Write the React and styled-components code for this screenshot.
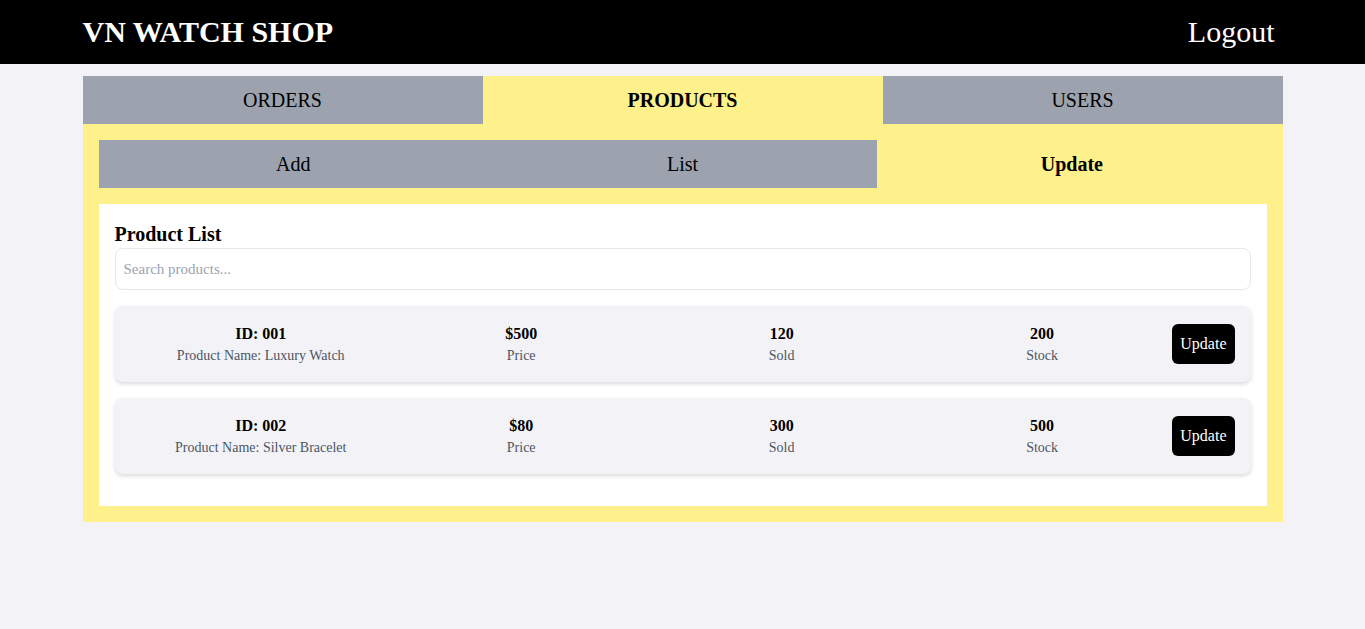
import React from "react";
import styled, { createGlobalStyle } from "styled-components";

const Global = createGlobalStyle`
  * { box-sizing: border-box; }
  body {
    margin: 0;
    background: #f3f3f7;
    font-family: "Liberation Serif", "Times New Roman", serif;
    color: #000;
  }
`;

const Header = styled.header`
  background: #000;
  height: 64px;
  display: flex;
  justify-content: center;
`;

const HeaderInner = styled.div`
  width: 1200px;
  display: flex;
  align-items: center;
  justify-content: space-between;
`;

const Brand = styled.h1`
  margin: 0;
  color: #fff;
  font-size: 30px;
  font-weight: bold;
  line-height: 36px;
`;

const LogoutButton = styled.button`
  background: none;
  border: none;
  color: #fff;
  font-family: inherit;
  font-size: 30px;
  line-height: 36px;
  padding: 0 8px;
  cursor: pointer;
`;

const Main = styled.main`
  width: 1200px;
  margin: 12px auto 0;
`;

const TabBar = styled.div`
  display: grid;
  grid-template-columns: repeat(3, 1fr);
`;

const Tab = styled.div`
  height: 48px;
  display: flex;
  align-items: center;
  justify-content: center;
  font-size: 20px;
  background: ${(p) => (p.$active ? "#fef08a" : "#9ca3af")};
  font-weight: ${(p) => (p.$active ? "bold" : "normal")};
`;

const Panel = styled.section`
  background: #fef08a;
  padding: 16px;
  display: flex;
  flex-direction: column;
  gap: 16px;
`;

const Card = styled.div`
  background: #fff;
  padding: 16px;
`;

const Title = styled.h2`
  margin: 0;
  font-size: 20px;
  line-height: 28px;
  font-weight: bold;
`;

const Search = styled.input`
  width: 100%;
  height: 42px;
  border: 1px solid #e5e7eb;
  border-radius: 8px;
  padding: 0 8px;
  font-family: inherit;
  font-size: 15px;
  margin-bottom: 16px;
  outline: none;
  &::placeholder { color: #9ca3af; }
`;

const Row = styled.div`
  display: flex;
  align-items: center;
  background: #f3f3f7;
  border-radius: 8px;
  padding: 16px;
  margin-bottom: 16px;
  box-shadow: 0 2px 4px rgba(0, 0, 0, 0.15);
`;

const Cell = styled.div`
  flex: 1;
  text-align: center;
`;

const Value = styled.div`
  font-size: 16px;
  line-height: 24px;
  font-weight: bold;
`;

const Label = styled.div`
  font-size: 14px;
  line-height: 20px;
  color: #4b5563;
`;

const UpdateButton = styled.button`
  background: #000;
  color: #fff;
  border: none;
  border-radius: 6px;
  height: 40px;
  padding: 0 8px;
  font-family: inherit;
  font-size: 16px;
  cursor: pointer;
`;

const products = [
  { id: "001", name: "Luxury Watch", price: "$500", sold: 120, stock: 200 },
  { id: "002", name: "Silver Bracelet", price: "$80", sold: 300, stock: 500 },
];

export default function App() {
  return (
    <>
      <Global />
      <Header>
        <HeaderInner>
          <Brand>VN WATCH SHOP</Brand>
          <LogoutButton>Logout</LogoutButton>
        </HeaderInner>
      </Header>
      <Main>
        <TabBar>
          <Tab>ORDERS</Tab>
          <Tab $active>PRODUCTS</Tab>
          <Tab>USERS</Tab>
        </TabBar>
        <Panel>
          <TabBar>
            <Tab>Add</Tab>
            <Tab>List</Tab>
            <Tab $active>Update</Tab>
          </TabBar>
          <Card>
            <Title>Product List</Title>
            <Search placeholder="Search products..." />
            {products.map((p) => (
              <Row key={p.id}>
                <Cell>
                  <Value>ID: {p.id}</Value>
                  <Label>Product Name: {p.name}</Label>
                </Cell>
                <Cell>
                  <Value>{p.price}</Value>
                  <Label>Price</Label>
                </Cell>
                <Cell>
                  <Value>{p.sold}</Value>
                  <Label>Sold</Label>
                </Cell>
                <Cell>
                  <Value>{p.stock}</Value>
                  <Label>Stock</Label>
                </Cell>
                <UpdateButton>Update</UpdateButton>
              </Row>
            ))}
          </Card>
        </Panel>
      </Main>
    </>
  );
}
